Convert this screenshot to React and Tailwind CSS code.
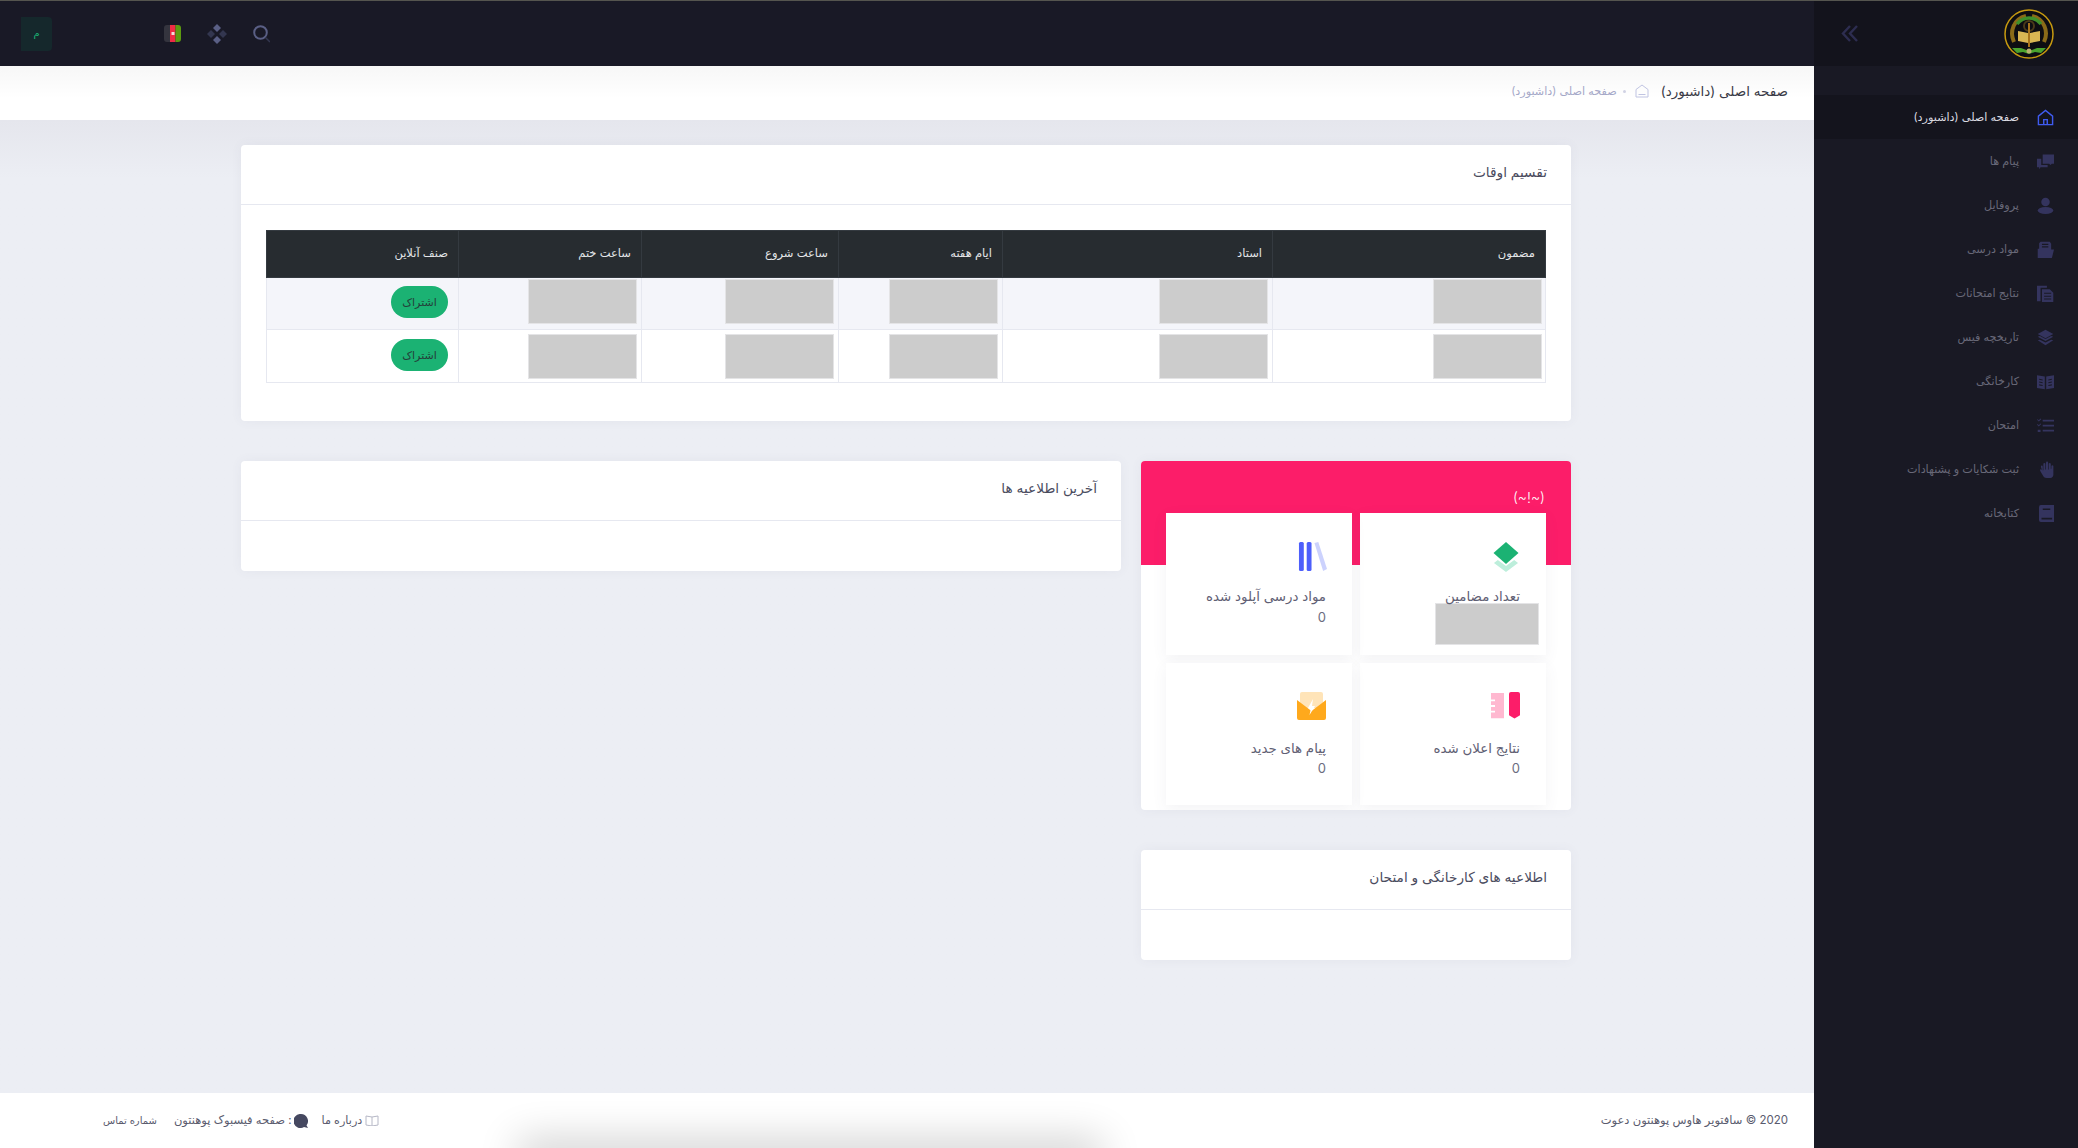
import React from "react";

const I = ({ children, w = 17, h = 17, vb = "0 0 24 24", c = "fill-[#34345e]" }) => (
  <svg width={w} height={h} viewBox={vb} preserveAspectRatio="none" className={c}>{children}</svg>
);

const menu = [
  ["صفحه اصلی (داشبورد)", <I key="a" c="fill-none stroke-[#3f5bf0]"><path strokeWidth="2" d="M2 22V10L12 2l10 8v12zM9.5 22v-7h5v7" /></I>],
  ["پیام ها", <I key="b"><path d="M8 2h16v13h-3l-2 2-2-2H8zM0 8h6v9h9v3H5l-2 3v-3H0z" /></I>],
  ["پروفایل", <I key="c"><circle cx="12" cy="7" r="6" /><ellipse cx="12" cy="19" rx="11" ry="5" /></I>],
  ["مواد درسی", <I key="d"><path d="M5 1h13l2 3v8h4l-3 12H1V11h2V3zM7 4v1.500h9V4zM7 7.500V9h9V7.500z" fillRule="evenodd" /></I>],
  ["نتایج امتحانات", <I key="e"><path d="M0 1h14v3H5v19H0zM7 6h11l5 5v13H7zM10 11v1.500h10V11zM10 15v1.500h10V15zM10 19v1.500h10V19z" fillRule="evenodd" /></I>],
  ["تاریخچه فیس", <I key="f"><path d="M12 1l11 6-11 6L1 7zM1 11l3-1 8 4 8-4 3 1-11 6zM1 16l3-1 8 4 8-4 3 1-11 7z" /></I>],
  ["کارخانگی", <I key="g"><path d="M0 3l11 2v18L0 21zM24 3L13 5v18l11-2zM3 8v1.500l5 1V9zM3 12v1.500l5 1V13zM3 16v1.500l5 1V17zM21 8l-5 1v1.500l5-1zM21 12l-5 1v1.500l5-1zM21 16l-5 1v1.500l5-1z" fillRule="evenodd" /></I>],
  ["امتحان", <I key="h"><path d="M8 4h16v2.500H8zM8 11h16v2.500H8zM8 18h16v2.500H8zM0 4l1-1 1.500 1.500L5 2l1 1-3.500 3.500zM0 11l1-1 1.500 1.500L5 9l1 1-3.500 3.500zM1 18h4v3H1z" /></I>],
  ["ثبت شکایات و پشنهادات", <I key="i" w={15}><path d="M3 8a1.500 1.500 0 013 0v5h1V4a1.700 1.700 0 013.200 0v8h1V2.500a1.700 1.700 0 013.400 0V12h1V4a1.700 1.700 0 013.200 0v7h1V7a1.700 1.700 0 013.200 0v12c0 3-2 5-5 5h-6c-3 0-5-2-6-4l-4-6c-1-2 1-3 2-2l1 1z" /></I>],
  ["کتابخانه", <I key="j" w={15}><path d="M3 0h21v24H3a3 3 0 01-3-3V3a3 3 0 013-3zM6 5v2h12V5zM4 18v2.500h17V18z" fillRule="evenodd" /></I>],
];

const Logo = () => (
  <svg width="50" height="50" viewBox="0 0 50 50">
    <circle cx="25" cy="25" r="24" fill="#0d0d12" stroke="#c79a10" strokeWidth="1.500" />
    <path d="M10 33C5 22 10 10 22 7" fill="none" stroke="#8a6a18" strokeWidth="4" />
    <path d="M40 33c5-11 0-23-12-26" fill="none" stroke="#8a6a18" strokeWidth="4" />
    <path d="M13 15c4-5 8-6 12-6s8 1 12 6" fill="none" stroke="#3f8f2a" strokeWidth="3.500" />
    <circle cx="25" cy="17" r="5" fill="none" stroke="#4a3a18" strokeWidth="2" />
    <path d="M14 22l10 2v10l-10-2zM36 22l-10 2v10l10-2z" fill="#d9b653" />
    <rect x="24" y="14" width="2" height="24" fill="#a8741c" />
    <path d="M8 39l9 0 8 3 8-3 9 0-5 5-6-1-6 2-6-2-6 1z" fill="#4aa32e" />
    <circle cx="25" cy="42" r="2.500" fill="#b8b070" />
  </svg>
);

const Flag = () => (
  <svg width="17" height="17" viewBox="0 0 17 17">
    <defs><clipPath id="fc"><rect width="17" height="17" rx="3" /></clipPath></defs>
    <g clipPath="url(#fc)">
      <rect width="6" height="17" fill="#34343e" />
      <rect x="6" width="5.500" height="17" fill="#ee2b45" />
      <rect x="11.500" width="5.500" height="17" fill="#5c9a10" />
      <rect x="7.500" y="7" width="3" height="3" fill="#f2dcdc" />
    </g>
  </svg>
);

const Box = ({ className = "" }) => (
  <div className={"bg-[#cccccc] border border-[#e4e4e6] " + className} />
);

const Card = ({ title, children }) => (
  <section className="bg-white rounded shadow-[0_0_12px_rgba(80,80,120,0.06)]">
    <header className="h-[60px] flex items-center px-[24px] pb-[5px] border-b border-[#e6e8f0] text-[13.700px] text-[#4a4b5e]">{title}</header>
    {children}
  </section>
);

const Stat = ({ icon, label, value, lower }) => (
  <div className="bg-white h-[142px] pt-[29px] pr-[26px] shadow-[0_4px_14px_rgba(80,80,120,0.07)]">
    <div className="h-[30px] flex justify-start">{icon}</div>
    <div className={(lower ? "mt-[16px]" : "mt-[14px]") + " text-[13.400px] leading-[20px] text-[#5f6074]"}>{label}</div>
    {value === null ? <Box className="w-[104px] h-[42px] -mr-[19px] -mt-[3px]" /> : <div className={(lower ? "mt-[1px]" : "mt-[2px]") + " text-[13px] leading-[18px] text-[#6b6c80] font-['Inter']"}>{value}</div>}
  </div>
);

const headers = ["مضمون", "استاد", "ایام هفته", "ساعت شروع", "ساعت ختم", "صنف آنلاین"];

const Row = ({ cls, h, boxTop, btnTop }) => (
  <tr className={cls + " " + h}>
    {[0, 1, 2, 3, 4].map((i) => (
      <td key={i} className={"border border-[#e6e8f0] align-top " + (i === 0 ? "pr-[3px] " : "pr-[4px] ") + boxTop}><Box className="w-[109px] h-[45px]" /></td>
    ))}
    <td className={"border border-[#e6e8f0] pr-[10px] align-top " + btnTop}>
      <button className="w-[57px] h-[32px] rounded-full bg-[#1bb273] text-[#24403a] text-[11px] block">اشتراک</button>
    </td>
  </tr>
);

export default function App() {
  return (
    <div dir="rtl" className="h-screen w-full overflow-hidden flex bg-[#eceef4] font-['Inter','DejaVu_Sans',sans-serif] border-t border-[#55554f]">
      <aside className="w-[264px] shrink-0 bg-[#191924] flex flex-col">
        <div className="h-[65px] bg-[#13131c] flex items-center justify-between pr-[24px] pl-[27px]">
          <Logo />
          <svg width="17" height="17" viewBox="0 0 17 17" className="fill-none stroke-[#2d2d50]" strokeWidth="2.400"><path d="M9 1L2 8.500 9 16M16 1L9 8.500 16 16" /></svg>
        </div>
        <nav className="pt-[29px]">
          {menu.map(([t, icon], i) => (
            <div key={t} className={"h-[44px] flex items-center gap-[18px] pr-[24px] text-[11.200px] " + (i === 0 ? "bg-[#14141d] text-[#dcdce2]" : "text-[#686878]")}>
              <span className="w-[17px] flex justify-start">{icon}</span>
              <span>{t}</span>
            </div>
          ))}
        </nav>
      </aside>

      <main className="flex-1 min-w-0 flex flex-col">
        <div className="h-[65px] bg-[#191926] flex items-center justify-end pl-[21px]">
          <div className="flex items-center gap-[26px] pl-[112px]">
            <svg width="17" height="18" viewBox="0 0 17 18" className="fill-none stroke-[#5a5f85]"><circle cx="7.500" cy="7.500" r="6.300" strokeWidth="2" /><path d="M12.500 12.500L17 17" strokeWidth="1.500" className="stroke-[#33364f]" /></svg>
            <svg width="20" height="20" viewBox="0 0 20 20"><path d="M10 0l4 4-4 4-4-4z M10 12l4 4-4 4-4-4z" fill="#5a5f85" /><path d="M4 6l4 4-4 4-4-4zM16 6l4 4-4 4-4-4z" fill="#33364f" /></svg>
            <Flag />
          </div>
          <div className="w-[31px] h-[34px] bg-[#15282c] rounded-r-[4px] flex items-center justify-center text-[#1bb273] text-[10px]">م</div>
        </div>

        <div className="h-[54px] shrink-0 bg-linear-to-b from-[#f7f7f7] to-white to-60% flex items-center pr-[26px] pb-[3px] gap-[12px]">
          <h1 className="text-[13.500px] text-[#3a3b47]">صفحه اصلی (داشبورد)</h1>
          <div className="flex items-center gap-[6px] text-[11.200px] text-[#a5a8c8]">
            <svg width="14" height="14" viewBox="0 0 14 14" className="fill-none stroke-[#c0c4e2] ml-[3px]"><path d="M1 13V5.500L7 1l6 4.500V13zM3.500 10.500h7" /></svg>
            <span className="w-[3px] h-[3px] rounded-full bg-[#d0d2e4]" />
            <span>صفحه اصلی (داشبورد)</span>
          </div>
        </div>

        <div className="flex-1 bg-linear-to-b from-[#e5e6ed] to-[#eceef4] to-6% pt-[25px]">
          <div className="w-[1330px] mr-[243px]">
            <Card title="تقسیم اوقات">
              <div className="p-[25px] pb-[38px]">
                <table className="w-[1279px] table-fixed border-collapse text-right">
                  <colgroup>
                    <col className="w-[273px]" /><col className="w-[270px]" /><col className="w-[164px]" /><col className="w-[197px]" /><col className="w-[183px]" /><col className="w-[192px]" />
                  </colgroup>
                  <thead>
                    <tr className="h-[47px] bg-[#272c30]">
                      {headers.map((t) => (
                        <th key={t} className="border border-[#343a40] pr-[10px] pb-[1px] font-normal text-[11.500px] text-[#e4e6e8]">{t}</th>
                      ))}
                    </tr>
                  </thead>
                  <tbody>
                    <Row cls="bg-[#f4f5fa]" h="h-[52px]" boxTop="pt-[1px]" btnTop="pt-[8px]" />
                    <Row cls="bg-white" h="h-[53px]" boxTop="pt-[4px]" btnTop="pt-[9px]" />
                  </tbody>
                </table>
              </div>
            </Card>

            <div className="mt-[40px] grid grid-cols-[430px_880px] gap-[20px] items-start">
              <div className="flex flex-col gap-[40px]">
                <section className="bg-white rounded overflow-hidden shadow-[0_0_12px_rgba(80,80,120,0.06)] pb-[5px]">
                  <div className="h-[104px] bg-[#fc1d69] px-[26px] pt-[26px] text-white text-[14px] font-light">(~!~)</div>
                  <div className="-mt-[52px] px-[25px] grid grid-cols-2 gap-[8px]">
                    <Stat
                      label="تعداد مضامین"
                      value={null}
                      icon={<svg width="26" height="30" viewBox="0 0 27 30" preserveAspectRatio="none" className="mr-[1px]"><path d="M1 21l4-3 8.500 6 8.500-6 4 3-12.500 9z" fill="#bdeedb" /><path d="M13.500 0L26.500 11 13.500 22 .5 11z" fill="#1bb273" /></svg>}
                    />
                    <Stat
                      label="مواد درسی آپلود شده"
                      value="0"
                      icon={<svg width="29" height="30" viewBox="0 0 30 30" preserveAspectRatio="none" className="-mr-[1px]"><rect x="1" width="5" height="29" rx="1.500" fill="#4d5ffb" /><rect x="9" width="5" height="29" rx="1.500" fill="#4d5ffb" /><path d="M17 1l4-1 9 27-4 2z" fill="#ccd2fd" /></svg>}
                    />
                    <Stat
                      lower
                      label="نتایج اعلان شده"
                      value="0"
                      icon={<svg width="29" height="28" viewBox="0 0 29 30" preserveAspectRatio="none"><path d="M0 1h13v27H0v-6h4v-2H0v-4h4v-2H0V10h4V8H0z" fill="#ffb8d0" /><path d="M18 2a2 2 0 012-2h7a2 2 0 012 2v23l-5.500 3.500L18 25z" fill="#fc1d69" /></svg>}
                    />
                    <Stat
                      lower
                      label="پیام های جدید"
                      value="0"
                      icon={<svg width="29" height="28" viewBox="0 0 29 28"><rect x="3" width="23" height="16" rx="2" fill="#ffe4b8" /><path d="M0 8l14.500 11L29 8v18a2 2 0 01-2 2H2a2 2 0 01-2-2z" fill="#ffa91c" /><path d="M16 7l-5 9h3l-1.500 7 5.500-9h-3z" fill="#fff" /></svg>}
                    />
                  </div>
                </section>
                <Card title="اطلاعیه های کارخانگی و امتحان"><div className="h-[50px]" /></Card>
              </div>
              <Card title="آخرین اطلاعیه ها"><div className="h-[50px]" /></Card>
            </div>
          </div>
        </div>

        <footer className="relative h-[55px] shrink-0 bg-white overflow-hidden flex items-center justify-between pr-[26px] pl-[103px] text-[11.200px] text-[#5a5b6e]">
          <span className="text-[11.500px]">2020 © سافتویر هاوس پوهنتون دعوت</span>
          <div className="flex items-center">
            <svg width="14" height="11" viewBox="0 0 14 11" className="fill-none stroke-[#b6b8c6] ml-[3px]"><path d="M7 2L1 1v9l6 1 6-1V1zM7 2v9" /></svg>
            <span>درباره ما</span>
            <svg width="14" height="14" viewBox="0 0 14 14" className="mr-[14px] ml-[2px]"><path d="M7 0a7 7 0 015.500 11.300L14 14l-4-1A7 7 0 117 0z" fill="#454860" /></svg>
            <span className="text-[11.500px]">: صفحه فیسبوک پوهنتون</span>
            <span className="mr-[17px] text-[10px]">شماره تماس</span>
          </div>
          <div className="absolute left-[530px] top-[calc(100%+4px)] w-[560px] h-[8px] shadow-[0_0_40px_12px_rgba(0,0,0,0.2)]" />
        </footer>
      </main>
    </div>
  );
}
